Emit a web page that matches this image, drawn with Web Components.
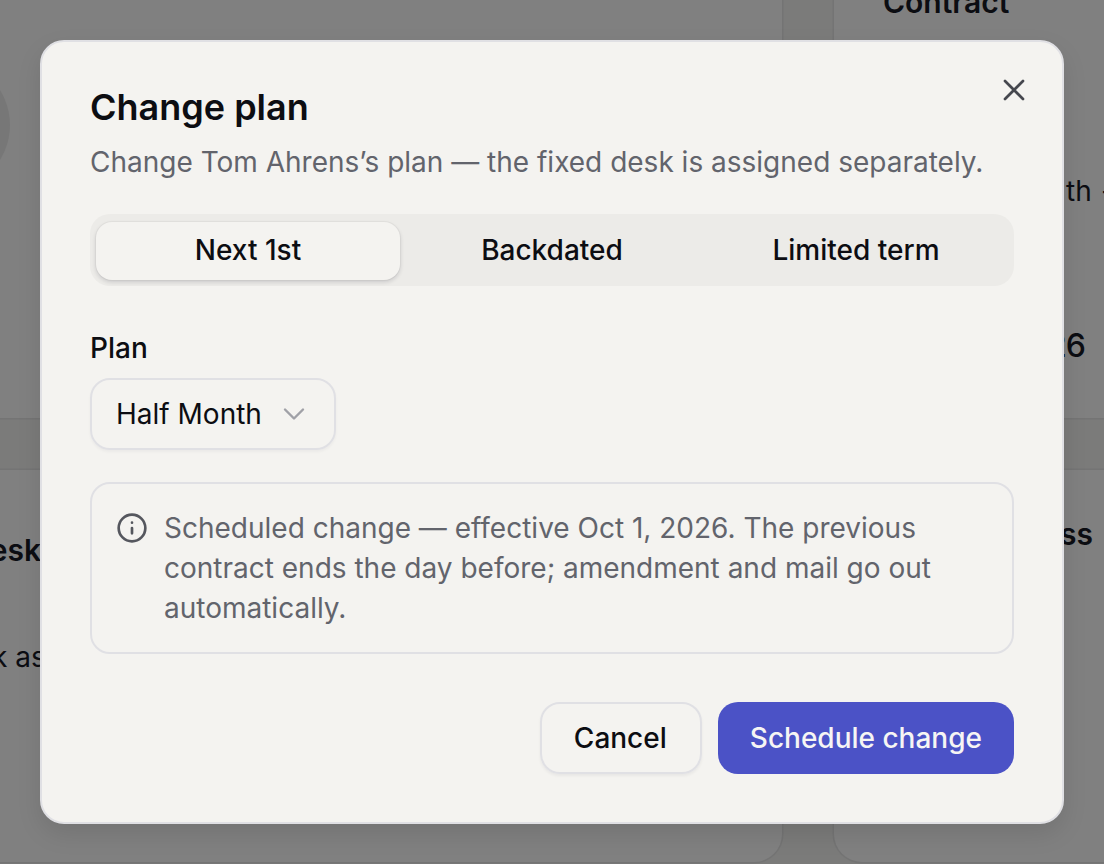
<!DOCTYPE html>
<html>
<head>
<meta charset="utf-8">
<title>Change plan</title>
<style>
  html, body { margin: 0; height: 100%; }
  body { width: 1104px; height: 864px; overflow: hidden; font-family: Inter, "Liberation Sans", sans-serif; }
</style>
</head>
<body>
<page-backdrop></page-backdrop>
<plan-dialog heading="Change plan">
  <span slot="sub">Change Tom Ahrens’s plan — the fixed desk is assigned separately.</span>
  <seg-tabs>
    <seg-tab active>Next 1st</seg-tab>
    <seg-tab>Backdated</seg-tab>
    <seg-tab>Limited term</seg-tab>
  </seg-tabs>
  <plan-select label="Plan" value="Half Month"></plan-select>
  <info-note>Scheduled change — effective Oct 1, 2026. The previous contract ends the day before; amendment and mail go out automatically.</info-note>
  <ui-button slot="actions">Cancel</ui-button>
  <ui-button slot="actions" primary>Schedule change</ui-button>
</plan-dialog>

<script>
// small helper, every element gets an open shadow root from a string
function shadow(el, html) {
  el.attachShadow({ mode: "open" }).innerHTML = html;
}

class PageBackdrop extends HTMLElement {
  connectedCallback() {
    shadow(this, `
      <style>
        :host { display: block; position: absolute; inset: 0; overflow: hidden; background: #7b7b7a; color: #0c0d12; }
        .grid { display: grid; grid-template-columns: 782px 1fr; grid-template-rows: 418px 392px; column-gap: 52px; row-gap: 52px; }
        .card { background: #808080; box-shadow: 0 0 0 1.5px #747474; position: relative; overflow: hidden; }
        .a { border-radius: 0 0 28px 0; }
        .b { border-radius: 0 0 0 28px; }
        .c { border-radius: 0 28px 28px 0; }
        .d { border-radius: 28px 0 0 28px; }
        .abs { position: absolute; white-space: nowrap; }
        .strong { font-size: 30px; font-weight: 600; }
        .txt { font-size: 28px; }
        .num { font-size: 32px; font-weight: 500; line-height: 40px; letter-spacing: -1px; }
        .avatar { left: -122px; top: 59px; width: 132px; height: 132px; border-radius: 50%; background: #777; }
      </style>
      <div class="grid">
        <div class="card a"><div class="abs avatar"></div></div>
        <div class="card b">
          <div class="abs strong" style="left:49px;top:-16px">Contract</div>
          <div class="abs txt" style="left:232px;top:174px">th →</div>
          <div class="abs num" style="left:213px;top:326px">26</div>
        </div>
        <div class="card c">
          <div class="abs strong" style="left:-32px;top:62px">Desk</div>
          <div class="abs txt" style="left:-8px;top:170px">k as</div>
        </div>
        <div class="card d">
          <div class="abs strong" style="left:152px;top:46px">Access</div>
        </div>
      </div>
    `);
  }
}

class PlanDialog extends HTMLElement {
  connectedCallback() {
    shadow(this, `
      <style>
        :host {
          display: flex; flex-direction: column; position: absolute; left: 40px; top: 40px;
          width: 1024px; height: 784px; box-sizing: border-box; padding: 45px 48px 48px;
          background: #f4f3f0; border: 2px solid #e0e0e4; border-radius: 24px;
          box-shadow: 0 10px 24px rgba(0,0,0,.1);
        }
        h2 { margin: 0; font-size: 36px; line-height: 40px; font-weight: 600; color: #0c0d12; }
        .sub { margin-top: 19px; font-size: 28px; line-height: 32px; color: #62646c; }
        .body { display: flex; flex-direction: column; margin-top: 36px; }
        .actions { display: flex; justify-content: flex-end; gap: 16px; margin-top: auto; }
        .close { position: absolute; right: 30px; top: 30px; width: 36px; height: 36px; color: #45474e; }
      </style>
      <h2>${this.getAttribute("heading")}</h2>
      <div class="sub"><slot name="sub"></slot></div>
      <svg class="close" viewBox="0 0 24 24" fill="none" stroke="currentColor" stroke-width="1.8" stroke-linecap="round"><path d="M18 6 6 18M6 6l12 12"/></svg>
      <div class="body"><slot></slot></div>
      <div class="actions"><slot name="actions"></slot></div>
    `);
  }
}

class SegTabs extends HTMLElement {
  connectedCallback() {
    shadow(this, `
      <style>
        :host { display: grid; grid-template-columns: repeat(3, 1fr); gap: 0; height: 72px; box-sizing: border-box; padding: 8px 6px 6px; background: #ecebe8; border-radius: 20px; }
      </style>
      <slot></slot>
    `);
  }
}

class SegTab extends HTMLElement {
  connectedCallback() {
    shadow(this, `
      <style>
        :host { display: flex; align-items: center; justify-content: center; box-sizing: border-box; padding-bottom: 2px; font-size: 28px; font-weight: 500; color: #0c0d12; border-radius: 16px; }
        :host([active]) { background: #f4f3f0; box-shadow: 0 2px 4px rgba(20,20,40,.16), 0 0 0 1px rgba(20,20,40,.03); }
      </style>
      <slot></slot>
    `);
  }
}

class PlanSelect extends HTMLElement {
  connectedCallback() {
    shadow(this, `
      <style>
        :host { display: block; margin-top: 44px; }
        label { display: block; font-size: 28px; line-height: 36px; font-weight: 500; color: #0c0d12; }
        .box { display: inline-flex; align-items: center; gap: 14px; margin-top: 12px; height: 72px; box-sizing: border-box; padding: 0 22px 0 24px; border: 2px solid #e0e0e4; border-radius: 20px; font-size: 28px; color: #0c0d12; box-shadow: 0 2px 3px rgba(20,20,40,.04); }
        svg { width: 36px; height: 36px; color: #a0a1a7; }
      </style>
      <label>${this.getAttribute("label")}</label>
      <div class="box">${this.getAttribute("value")}<svg viewBox="0 0 24 24" fill="none" stroke="currentColor" stroke-width="1.6" stroke-linecap="round" stroke-linejoin="round"><path d="m6 9 6 6 6-6"/></svg></div>
    `);
  }
}

class InfoNote extends HTMLElement {
  connectedCallback() {
    shadow(this, `
      <style>
        :host { display: flex; gap: 16px; margin-top: 32px; box-sizing: border-box; height: 172px; padding: 24px 64px 0 24px; border: 2px solid #e0e0e4; border-radius: 20px; font-size: 28px; line-height: 40px; color: #62646c; }
        svg { flex: none; width: 32px; height: 32px; margin-top: 4px; color: #55575e; }
      </style>
      <svg viewBox="0 0 24 24" fill="none" stroke="currentColor" stroke-width="2" stroke-linecap="round"><circle cx="12" cy="12" r="10"/><path d="M12 16v-4M12 8h.01"/></svg>
      <div><slot></slot></div>
    `);
  }
}

class UiButton extends HTMLElement {
  connectedCallback() {
    shadow(this, `
      <style>
        :host { display: inline-flex; align-items: center; justify-content: center; height: 72px; box-sizing: border-box; padding: 0 33px 0 32px; border-radius: 20px; font-size: 28px; font-weight: 500; color: #0c0d12; border: 2px solid #e0e0e4; box-shadow: 0 2px 3px rgba(20,20,40,.05); }
        :host([primary]) { background: #4b52c6; border: 0; padding: 0 32px; color: #f6f5f4; box-shadow: none; }
      </style>
      <slot></slot>
    `);
  }
}

customElements.define("page-backdrop", PageBackdrop);
customElements.define("plan-dialog", PlanDialog);
customElements.define("seg-tabs", SegTabs);
customElements.define("seg-tab", SegTab);
customElements.define("plan-select", PlanSelect);
customElements.define("info-note", InfoNote);
customElements.define("ui-button", UiButton);
</script>
</body>
</html>
